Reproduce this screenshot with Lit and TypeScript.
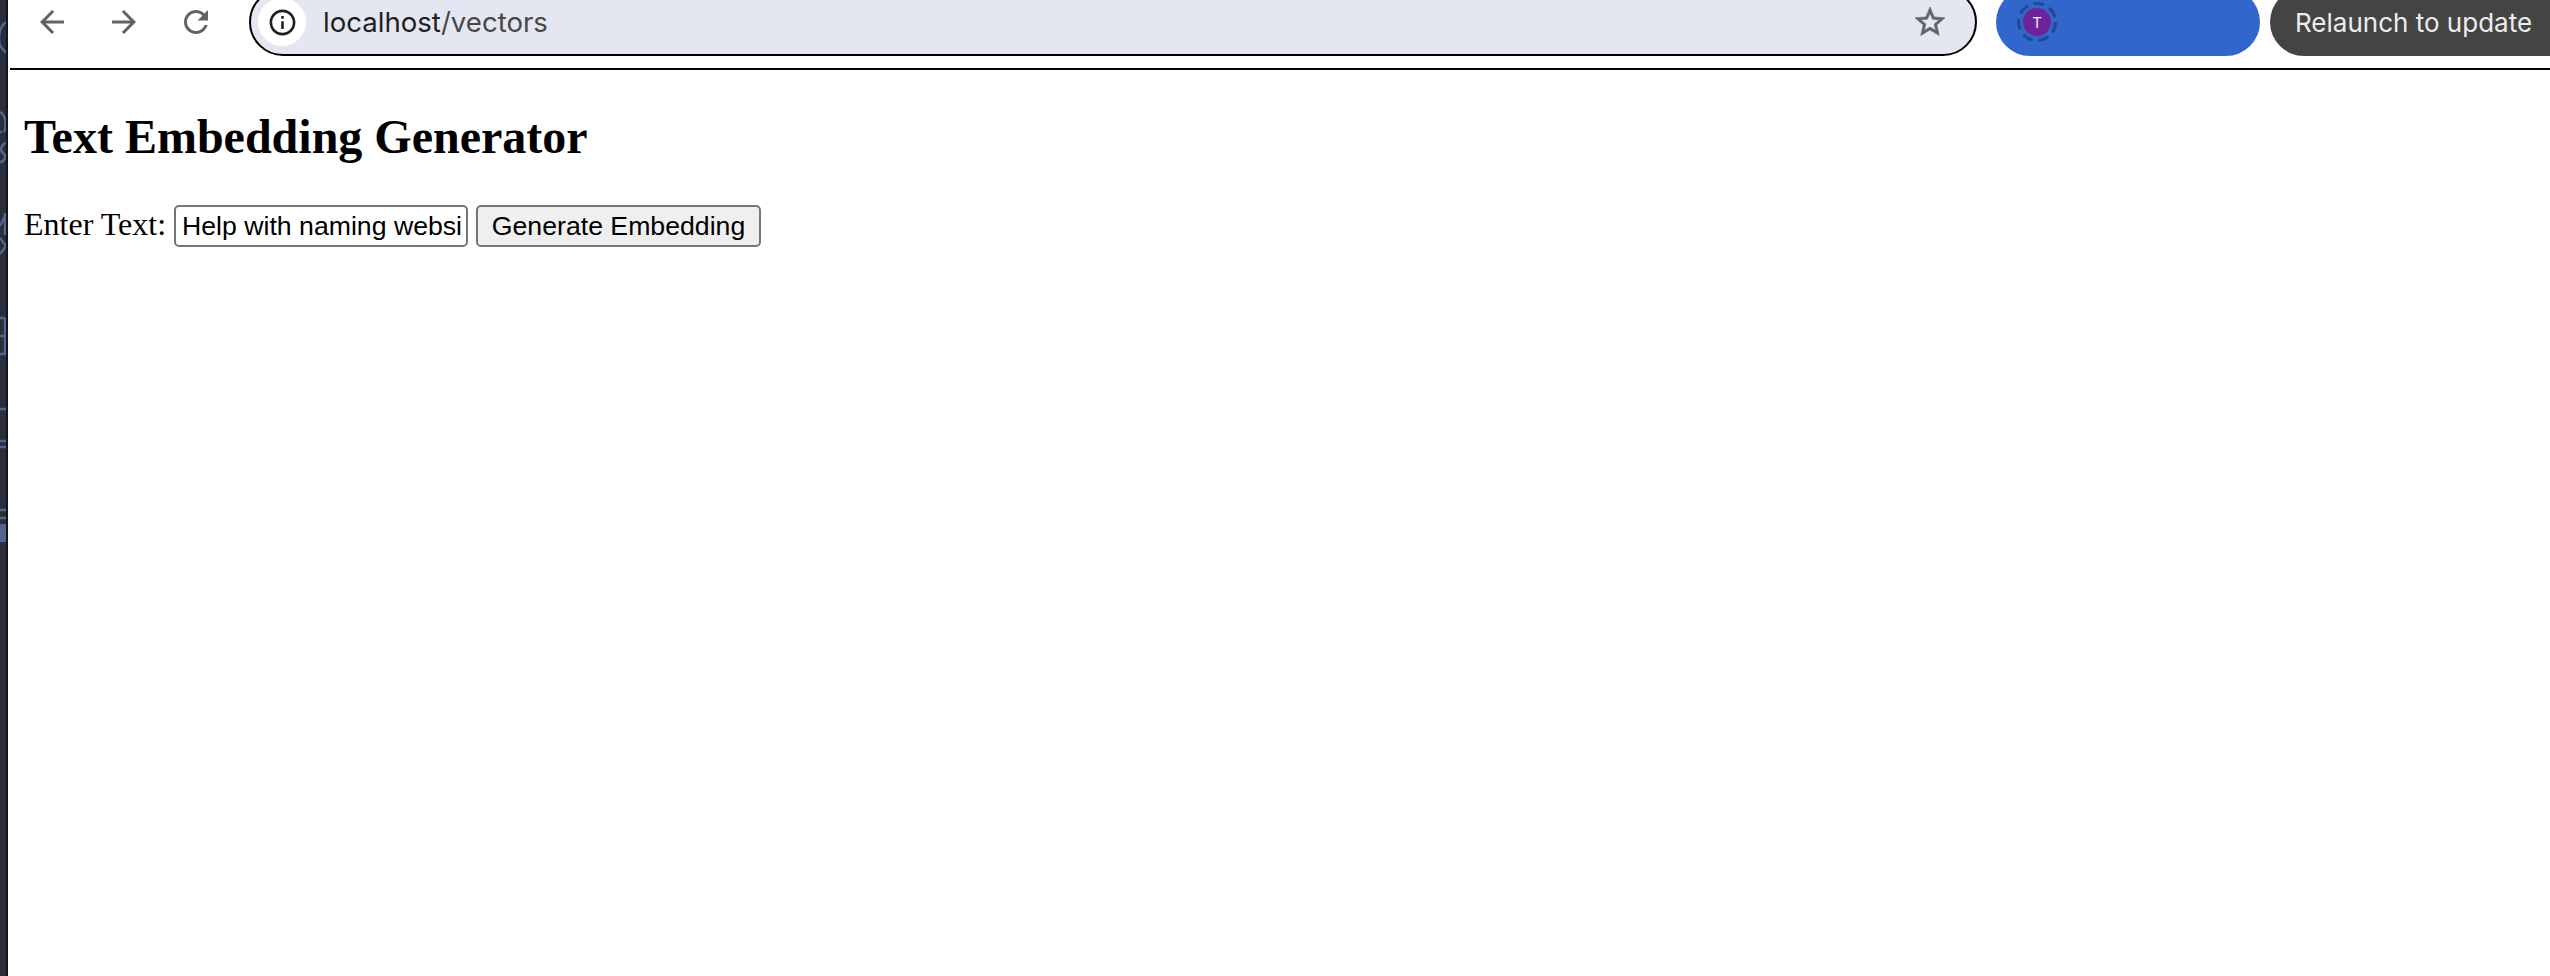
import { LitElement, html, css } from "lit";
import { customElement } from "lit/decorators.js";

const BACK = "M20 11H7.83l5.59-5.59L12 4l-8 8 8 8 1.41-1.41L7.83 13H20v-2z";
const FORWARD = "M12 4l-1.41 1.41L16.17 11H4v2h12.17l-5.58 5.59L12 20l8-8z";
const RELOAD = "M17.65 6.35C16.2 4.9 14.21 4 12 4c-4.42 0-7.99 3.58-7.99 8s3.57 8 7.99 8c3.73 0 6.84-2.55 7.73-6h-2.08c-.82 2.33-3.04 4-5.65 4-3.31 0-6-2.69-6-6s2.69-6 6-6c1.66 0 3.14.69 4.22 1.78L13 11h7V4l-2.35 2.35z";
const INFO = "M11 7h2v2h-2zm0 4h2v6h-2zm1-9C6.48 2 2 6.48 2 12s4.48 10 10 10 10-4.48 10-10S17.52 2 12 2zm0 18c-4.41 0-8-3.59-8-8s3.59-8 8-8 8 3.59 8 8-3.59 8-8 8z";
const STAR = "M22 9.24l-7.19-.62L12 2 9.19 8.63 2 9.24l5.46 4.73L5.82 21 12 17.27 18.18 21l-1.63-7.03L22 9.24zM12 15.4l-3.76 2.27 1-4.28-3.32-2.88 4.38-.38L12 6.1l1.71 4.04 4.38.38-3.32 2.88 1 4.28L12 15.4z";

@customElement("app-root")
export class AppRoot extends LitElement {
  static styles = css`
    :host { display: block; height: 976px; overflow: hidden; background: #fff; }
    .shell { display: flex; height: 976px; }
    .edge { width: 8px; flex: none; background: #2b2d3a; border-right: 2px solid #14151b; box-sizing: border-box; }
    .edge svg { display: block; }
    .main { flex: 1; min-width: 0; display: flex; flex-direction: column; }
    .toolbar { height: 68px; flex: none; display: flex; align-items: flex-start; margin-left: 2px; padding-left: 6px; border-bottom: 2px solid #000; }
    .nav { width: 72px; height: 44px; flex: none; display: flex; align-items: center; justify-content: center; }
    .nav svg { display: block; fill: #606368; }
    .omni { width: 1728px; height: 68px; margin: -12px 0 0 17px; flex: none; box-sizing: border-box; display: flex; align-items: center; padding: 0 27px 0 7px; background: #e4e7f1; border: 2px solid #000; border-radius: 34px; }
    .chip { width: 48px; height: 48px; border-radius: 50%; background: #fff; display: flex; align-items: center; justify-content: center; flex: none; }
    .chip svg { fill: #1f1f1f; display: block; }
    .url { margin-left: 17px; font: 27.6px "Inter", sans-serif; color: #1f1f1f; flex: 1; }
    .url span { color: #474747; }
    .star { fill: #606368; stroke: #606368; stroke-width: 0.4; display: block; flex: none; }
    .profile { width: 264px; height: 68px; margin: -12px 0 0 19px; flex: none; box-sizing: border-box; padding: 0 0 0 19px; background: #3166cc; border-radius: 34px; display: flex; align-items: center; }
    .avatar { display: block; }
    .avatar text { font: 15px "Inter", sans-serif; fill: #f1e8f6; }
    .relaunch { flex: 1; min-width: 0; height: 68px; margin: -12px 0 0 10px; box-sizing: border-box; padding: 0 0 0 25px; background: #444444; border-radius: 34px 0 0 34px; color: #ececec; font: 26px "Inter", sans-serif; display: flex; align-items: center; white-space: nowrap; overflow: hidden; }
    .page { padding: 7px 16px 0; }
    h1 { margin: 32px 0 41px; font: bold 48px/55px "Liberation Serif", "Times New Roman", serif; color: #000; }
    .row { display: flex; align-items: center; height: 42px; font: 32px "Liberation Serif", "Times New Roman", serif; color: #000; }
    label { padding-bottom: 3px; }
    input { width: 294px; height: 42px; margin-left: 8px; box-sizing: border-box; padding: 0 4px 0 6px; border: 2px solid #767676; border-radius: 5px; background: #fff; color: #000; font: 26.67px "Liberation Sans", Arial, sans-serif; outline: none; }
    button { width: 285px; height: 42px; margin-left: 8px; box-sizing: border-box; padding: 0; border: 2px solid #767676; border-radius: 5px; background: #efefef; color: #000; font: 26.67px "Liberation Sans", Arial, sans-serif; }
  `;

  private icon(d: string, size: number, cls = "") {
    return html`<svg class=${cls} width=${size} height=${size} viewBox="0 0 24 24" aria-hidden="true"><path d=${d}></path></svg>`;
  }

  render() {
    return html`<div class="shell">
      <div class="edge">
        <svg width="6" height="976" viewBox="0 0 6 976" fill="none" stroke="#55648f" stroke-width="2.5" aria-hidden="true">
          <path d="M6 22C-1 27-3 40 1 47l5 6"></path>
          <path d="M0 112c6 3 7 14 4 20M0 132h2M6 143c-6 2-6 9-2 11 3 3 0 8-4 8"></path>
          <path d="M5 213v22M0 226l5-10M0 238l6 8-6 8"></path>
          <path d="M5 318v37M0 318h5M0 336h6M0 354h6"></path>
          <path d="M0 409h6M0 441h6M0 447h6"></path>
          <path d="M0 510h6M0 518h6"></path>
          <rect x="0" y="524" width="6" height="18" fill="#55648f" stroke="none"></rect>
        </svg>
      </div>
      <div class="main">
        <div class="toolbar">
          <div class="nav">${this.icon(BACK, 36)}</div>
          <div class="nav">${this.icon(FORWARD, 36)}</div>
          <div class="nav">${this.icon(RELOAD, 36)}</div>
          <div class="omni">
            <div class="chip">${this.icon(INFO, 31)}</div>
            <div class="url">localhost<span>/vectors</span></div>
            ${this.icon(STAR, 36, "star")}
          </div>
          <div class="profile">
            <svg class="avatar" width="44" height="44" viewBox="0 0 44 44" aria-hidden="true">
              <circle cx="22" cy="22" r="18.5" fill="none" stroke="#1d4a92" stroke-width="3" stroke-dasharray="11 5.6"></circle>
              <circle cx="22" cy="22" r="14" fill="#6f2398"></circle>
              <text x="22" y="27.5" text-anchor="middle">T</text>
            </svg>
          </div>
          <div class="relaunch">Relaunch to update</div>
        </div>
        <div class="page">
          <h1>Text Embedding Generator</h1>
          <div class="row">
            <label for="t">Enter Text:</label>
            <input id="t" type="text" .value=${"Help with naming website"} />
            <button type="button">Generate Embedding</button>
          </div>
        </div>
      </div>
    </div>`;
  }
}
